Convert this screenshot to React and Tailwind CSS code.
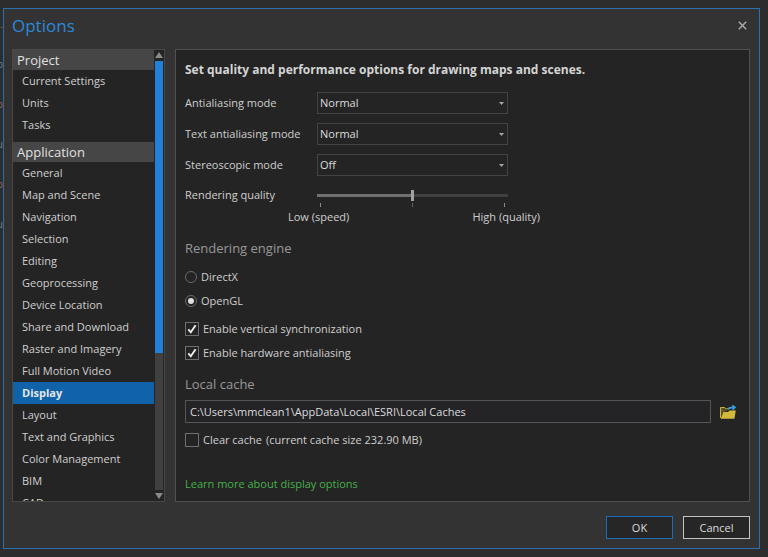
import React, { useState } from 'react';

const navGroups = [
    { title: 'Project', items: ['Current Settings', 'Units', 'Tasks'] },
    {
        title: 'Application',
        items: [
            'General',
            'Map and Scene',
            'Navigation',
            'Selection',
            'Editing',
            'Geoprocessing',
            'Device Location',
            'Share and Download',
            'Raster and Imagery',
            'Full Motion Video',
            'Display',
            'Layout',
            'Text and Graphics',
            'Color Management',
            'BIM',
            'CAD',
        ],
    },
];

const modes = [
    { id: 'antialiasing', label: 'Antialiasing mode', value: 'Normal', options: ['Normal', 'Fast', 'Off'] },
    { id: 'text-antialiasing', label: 'Text antialiasing mode', value: 'Normal', options: ['Normal', 'Force'] },
    { id: 'stereoscopic', label: 'Stereoscopic mode', value: 'Off', options: ['Off', 'Anaglyph'] },
];

const SelectRow = ({ id, label, value, options }) => (
    <div className="flex items-center">
        <label htmlFor={id} className="w-33">{label}</label>
        <div className="grid w-[191px] items-center">
            <select
                id={id}
                defaultValue={value}
                className="col-start-1 row-start-1 h-[22px] appearance-none border border-[#434343] bg-[#242424] px-[2px] text-[#dcdcdc]"
            >
                {options.map(o => <option key={o}>{o}</option>)}
            </select>
            <svg width="5" height="3" viewBox="0 0 5 3" className="pointer-events-none col-start-1 row-start-1 mr-[4px] justify-self-end">
                <path d="M0 0h5L2.5 3z" fill="#a8a8a8" />
            </svg>
        </div>
    </div>
);

const Radio = ({ label, ...props }) => (
    <label className="flex h-6 items-center gap-1">
        <span className="grid place-items-center">
            <input type="radio" name="engine" className="peer col-start-1 row-start-1 size-3 appearance-none rounded-full border border-[#6a6a6a]" {...props} />
            <span className="col-start-1 row-start-1 hidden size-[6px] rounded-full bg-[#e0e0e0] peer-checked:block" />
        </span>
        {label}
    </label>
);

const Check = ({ children, ...props }) => (
    <label className="flex h-6 items-center gap-1">
        <span className="grid place-items-center">
            <input type="checkbox" className="peer col-start-1 row-start-1 size-[14px] appearance-none border border-[#6e6e6e]" {...props} />
            <svg width="10" height="10" viewBox="0 0 10 10" className="pointer-events-none col-start-1 row-start-1 hidden peer-checked:block">
                <path d="M1.3 5.3 3.8 8.3 8.6 1.3" fill="none" stroke="#f0f0f0" strokeWidth="1.9" />
            </svg>
        </span>
        {children}
    </label>
);

const FolderIcon = () => (
    <svg width="17" height="14" viewBox="0 0 17 14">
        <path d="M.5 13V2.5h4.2l1 1.3h2.8" fill="none" stroke="#cdb236" />
        <path d="M1 13.5V3h3.5l1 1.5H9L3 7.5z" fill="#5c5427" />
        <path d="M3.4 7H8l1.6-1.4h6.2L14.4 13.7H.8z" fill="#d2b93a" />
        <path d="M8 4.4C9 2.6 11 2.3 14.6 2.4M12.2.3l2.8 2.1-2.4 2.4" fill="none" stroke="#3a9bdc" strokeWidth="1.6" />
    </svg>
);

const Sidebar = ({ selected, onSelect }) => (
    <nav className="flex w-[153px] shrink-0 border border-[#484848] bg-[#242424]">
        <div className="flex-1 overflow-hidden">
            {navGroups.map(group => (
                <section key={group.title} className="mb-[6px]">
                    <h2 className="h-5 bg-[#464646] px-1 text-[13px] leading-5 text-[#e0e0e0]">{group.title}</h2>
                    {group.items.map(item => (
                        <button
                            key={item}
                            onClick={() => onSelect(item)}
                            className={item === selected
                                ? 'block h-[22px] w-full bg-[#1163a9] px-[9px] text-left font-bold text-[#e6e6e6]'
                                : 'block h-[22px] w-full px-[9px] text-left'}
                        >
                            {item}
                        </button>
                    ))}
                </section>
            ))}
        </div>
        <div className="flex w-[10px] flex-col items-center">
            <svg width="8" height="11" viewBox="0 0 8 11" className="shrink-0">
                <path d="M4 2l4 6H0z" fill="#8a8a8a" />
            </svg>
            <div className="w-2 flex-1 bg-[#404040]">
                <div className="h-[68%] bg-[#2181d8]" />
            </div>
            <svg width="8" height="11" viewBox="0 0 8 11" className="shrink-0">
                <path d="M0 3h8L4 9z" fill="#8a8a8a" />
            </svg>
        </div>
    </nav>
);

const App = () => {
    const [selected, setSelected] = useState('Display');

    return (
        <div className="flex h-screen bg-[#2d2d2d] py-2 pr-2 font-['Open_Sans','Noto_Sans',sans-serif] text-[11px] leading-4 text-[#cfcfcf]">
            {/* sliver of the window behind the dialog */}
            <div className="flex w-[3px] shrink-0 flex-col items-end gap-6 overflow-hidden pt-2 text-[#777777]">
                <span className="text-[#a0604e]">:.</span>
                <span>o</span>
                <span className="text-[#a0604e]">p</span>
                <span>u</span>
                <span className="text-[#a0604e]">p</span>
                <span>u</span>
            </div>

            <div role="dialog" aria-labelledby="title" className="flex flex-1 flex-col border border-[#2a70ad] bg-[#333333] pr-[9px] pb-[9px] pl-2">
                <header className="flex h-10 shrink-0 items-center justify-between">
                    <h1 id="title" className="pb-[6px] text-[17px] leading-6 text-[#2b88d8]">Options</h1>
                    <button aria-label="Close" className="mb-2 p-[3px]">
                        <svg width="9" height="9" viewBox="0 0 9 9">
                            <path d="M.8.8l7.4 7.4M8.2.8.8 8.2" stroke="#a8a8a8" strokeWidth="1.5" />
                        </svg>
                    </button>
                </header>

                <div className="flex min-h-0 flex-1 gap-[10px]">
                    <Sidebar selected={selected} onSelect={setSelected} />

                    <main className="flex flex-1 flex-col overflow-hidden border border-[#505050] bg-[#242424] px-[9px] pt-3">
                        <h2 className="text-[12px] font-bold text-[#d4d4d4]">Set quality and performance options for drawing maps and scenes.</h2>

                        <div className="mt-[14px] flex flex-col gap-[9px]">
                            {modes.map(mode => <SelectRow key={mode.id} {...mode} />)}
                        </div>

                        <div className="mt-[11px] flex items-start">
                            <label htmlFor="quality" className="w-33">Rendering quality</label>
                            <div className="w-[191px]">
                                <input
                                    id="quality"
                                    type="range"
                                    defaultValue="50"
                                    className="block h-4 w-full appearance-none bg-transparent [&::-webkit-slider-runnable-track]:h-[3px] [&::-webkit-slider-runnable-track]:bg-linear-to-r [&::-webkit-slider-runnable-track]:from-[#707070] [&::-webkit-slider-runnable-track]:from-50% [&::-webkit-slider-runnable-track]:to-[#404040] [&::-webkit-slider-runnable-track]:to-50% [&::-webkit-slider-thumb]:-mt-1 [&::-webkit-slider-thumb]:h-[11px] [&::-webkit-slider-thumb]:w-[3px] [&::-webkit-slider-thumb]:appearance-none [&::-webkit-slider-thumb]:bg-[#a0a0a0]"
                                />
                                <div className="flex justify-between px-[3px]">
                                    <span className="h-1 w-px bg-[#8a8a8a]" />
                                    <span className="h-1 w-px bg-[#606060]" />
                                    <span className="h-1 w-px bg-[#8a8a8a]" />
                                </div>
                                <div className="-mx-8 mt-[2px] flex justify-between">
                                    <span className="pl-[3px]">Low (speed)</span>
                                    <span>High (quality)</span>
                                </div>
                            </div>
                        </div>

                        <h3 className="mt-[15px] mb-[9px] text-[13px] text-[#989898]">Rendering engine</h3>
                        <Radio label="DirectX" />
                        <Radio label="OpenGL" defaultChecked />
                        <div className="mt-1">
                            <Check defaultChecked>Enable vertical synchronization</Check>
                            <Check defaultChecked>Enable hardware antialiasing</Check>
                        </div>

                        <h3 className="mt-[11px] mb-2 text-[13px] text-[#989898]">
                            <label htmlFor="cache">Local cache</label>
                        </h3>
                        <div className="flex items-center gap-[9px]">
                            <input
                                id="cache"
                                defaultValue="C:\Users\mmclean1\AppData\Local\ESRI\Local Caches"
                                className="h-[23px] min-w-0 flex-1 border border-[#555555] bg-[#242427] px-1 text-[#dcdcdc]"
                            />
                            <button aria-label="Browse" className="mr-[3px]">
                                <FolderIcon />
                            </button>
                        </div>
                        <div className="mt-[5px]">
                            <Check>
                                <span>Clear cache</span>
                                <span>(current cache size 232.90 MB)</span>
                            </Check>
                        </div>
                        <a href="#help" className="mt-6 self-start text-[#45b04a]">Learn more about display options</a>
                    </main>
                </div>

                <footer className="mt-[14px] flex shrink-0 justify-end gap-[10px]">
                    <button className="h-[23px] w-[67px] border border-[#1a6fb8] bg-[#262626] text-[#dcdcdc]">OK</button>
                    <button className="h-[23px] w-[67px] border border-[#c4c4c4] bg-[#262626] text-[#dcdcdc]">Cancel</button>
                </footer>
            </div>
        </div>
    );
};

export default App;
